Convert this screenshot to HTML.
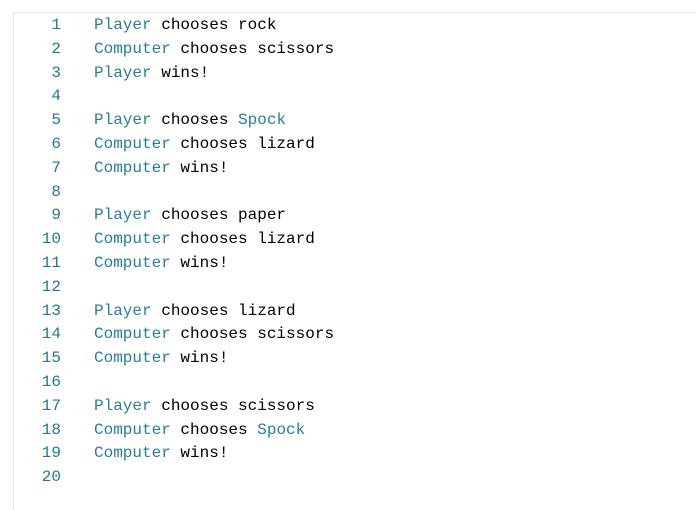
<!DOCTYPE html>
<html><head><style>
html,body{margin:0;padding:0;background:#fff;width:696px;height:510px;overflow:hidden}
.box{position:absolute;left:13px;top:12px;width:683px;height:498px;border-top:1px solid #e6e6e6;border-left:1px solid #e6e6e6;box-sizing:border-box}
.in{position:absolute;left:0;top:0}
.l{position:absolute;left:0;width:600px;height:24px;font-family:"Liberation Mono",monospace;font-size:16px;line-height:24px;white-space:pre;color:#000}
.n{position:absolute;left:0;width:48px;color:#237893;text-align:right}
.t{position:absolute;left:81px}
.c{color:#267f99}
</style></head><body>
<div class="box"></div>
<div class="in" style="left:13px;top:13px">
<div class="l" style="top:0px"><span class="n">1</span><span class="t"><span class="c">Player</span> chooses rock</span></div>
<div class="l" style="top:23.8px"><span class="n">2</span><span class="t"><span class="c">Computer</span> chooses scissors</span></div>
<div class="l" style="top:47.6px"><span class="n">3</span><span class="t"><span class="c">Player</span> wins!</span></div>
<div class="l" style="top:71.4px"><span class="n">4</span></div>
<div class="l" style="top:95.2px"><span class="n">5</span><span class="t"><span class="c">Player</span> chooses <span class="c">Spock</span></span></div>
<div class="l" style="top:119px"><span class="n">6</span><span class="t"><span class="c">Computer</span> chooses lizard</span></div>
<div class="l" style="top:142.8px"><span class="n">7</span><span class="t"><span class="c">Computer</span> wins!</span></div>
<div class="l" style="top:166.6px"><span class="n">8</span></div>
<div class="l" style="top:190.4px"><span class="n">9</span><span class="t"><span class="c">Player</span> chooses paper</span></div>
<div class="l" style="top:214.2px"><span class="n">10</span><span class="t"><span class="c">Computer</span> chooses lizard</span></div>
<div class="l" style="top:238px"><span class="n">11</span><span class="t"><span class="c">Computer</span> wins!</span></div>
<div class="l" style="top:261.8px"><span class="n">12</span></div>
<div class="l" style="top:285.6px"><span class="n">13</span><span class="t"><span class="c">Player</span> chooses lizard</span></div>
<div class="l" style="top:309.4px"><span class="n">14</span><span class="t"><span class="c">Computer</span> chooses scissors</span></div>
<div class="l" style="top:333.2px"><span class="n">15</span><span class="t"><span class="c">Computer</span> wins!</span></div>
<div class="l" style="top:357px"><span class="n">16</span></div>
<div class="l" style="top:380.8px"><span class="n">17</span><span class="t"><span class="c">Player</span> chooses scissors</span></div>
<div class="l" style="top:404.6px"><span class="n">18</span><span class="t"><span class="c">Computer</span> chooses <span class="c">Spock</span></span></div>
<div class="l" style="top:428.4px"><span class="n">19</span><span class="t"><span class="c">Computer</span> wins!</span></div>
<div class="l" style="top:452.2px"><span class="n">20</span></div>
</div>
</body></html>
